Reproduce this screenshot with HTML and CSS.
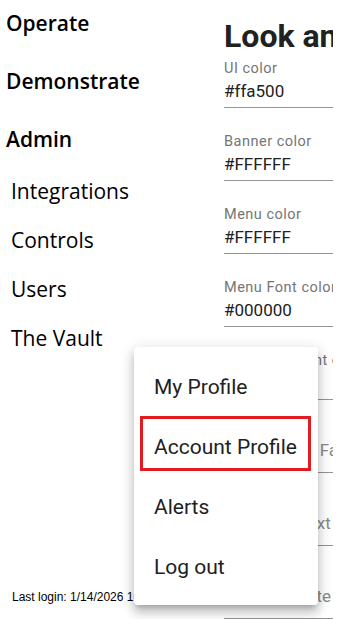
FILE: index.html
```html
<!DOCTYPE html>
<html>
    <head>
        <title>Look and Feel</title>
        <meta charset="UTF-8">
        <meta name="viewport" content="width=device-width, initial-scale=1.0">
        <link rel="stylesheet" href="styles.css">
    </head>
    <body>
        <div class="page">
            <div class="sideNav">
                <div class="navHead">Operate</div>
                <div class="navHead">Demonstrate</div>
                <div class="navHead">Admin</div>
                <div class="navItem">Integrations</div>
                <div class="navItem">Controls</div>
                <div class="navItem">Users</div>
                <div class="navItem">The Vault</div>
                <div class="lastLogin">Last login: 1/14/2026 10:42 AM</div>
            </div>
            <div class="mainContainer">
                <h1 class="pageTitle">Look and Feel</h1>
                <div class="field">
                    <label>UI color</label>
                    <div class="fieldValue">#ffa500</div>
                </div>
                <div class="field">
                    <label>Banner color</label>
                    <div class="fieldValue">#FFFFFF</div>
                </div>
                <div class="field">
                    <label>Menu color</label>
                    <div class="fieldValue">#FFFFFF</div>
                </div>
                <div class="field">
                    <label>Menu Font color</label>
                    <div class="fieldValue">#000000</div>
                </div>
                <div class="field">
                    <label>Sub Menu Font color</label>
                    <div class="fieldValue">#000000</div>
                </div>
                <div class="field empty">
                    <label>Banner Font Family</label>
                    <div class="fieldValue"></div>
                </div>
                <div class="field empty">
                    <label>Welcome Text</label>
                    <div class="fieldValue"></div>
                </div>
                <div class="field empty">
                    <label>Customer Site</label>
                    <div class="fieldValue"></div>
                </div>
            </div>
        </div>

        <div class="userMenu">
            <div class="menuItem">My Profile</div>
            <div class="menuItem">Account Profile</div>
            <div class="menuItem">Alerts</div>
            <div class="menuItem">Log out</div>
            <span class="highlightBox"></span>
        </div>
    </body>
</html>
```

FILE: styles.css
```css
body{
    margin: 0;
    background-color: #ffffff;
    overflow: hidden;
}

.page{
    display: flex;
    width: 333px;
    height: 619px;
    overflow: hidden;
}

.sideNav{
    display: flex;
    flex-direction: column;
    width: 224px;
    flex-shrink: 0;
    font-family: "Open Sans", "Noto Sans", sans-serif;
    color: #000000;
}
.navHead{
    height: 58px;
    line-height: 47px;
    padding-left: 6px;
    font-size: 21px;
    font-weight: 600;
}
.navHead:nth-child(3){
    height: 60px;
}
.navItem{
    height: 49px;
    line-height: 30px;
    padding-left: 11px;
    font-size: 21px;
}
.lastLogin{
    margin-top: auto;
    padding-left: 12px;
    padding-bottom: 15px;
    font-family: "Liberation Sans", Arial, sans-serif;
    font-size: 12px;
    line-height: 14px;
    white-space: nowrap;
    color: #000000;
}

.mainContainer{
    flex: 1;
    min-width: 0;
    overflow: hidden;
    font-family: Roboto, "Liberation Sans", sans-serif;
}
.pageTitle{
    margin: 18px 0 7px 0;
    height: 36px;
    font-size: 32px;
    line-height: 36px;
    font-weight: bold;
    color: #212121;
    white-space: nowrap;
}
.field{
    display: flex;
    flex-direction: column;
    gap: 4px;
    margin-bottom: 26px;
    padding-bottom: 6px;
    border-bottom: 1px solid #949494;
}
.field label{
    font-size: 14.5px;
    line-height: 16px;
    letter-spacing: 0.5px;
    color: #757575;
    white-space: nowrap;
}
.fieldValue{
    height: 20px;
    font-size: 17px;
    line-height: 20px;
    color: #212121;
    white-space: nowrap;
}
.field.empty label{
    font-size: 17px;
    line-height: 20px;
    letter-spacing: 0;
    margin-top: 14px;
    margin-bottom: 6px;
    color: #8a8a8a;
}
.field.empty .fieldValue{
    display: none;
}

.userMenu{
    position: absolute;
    left: 134px;
    top: 347px;
    width: 184px;
    padding: 10px 0 8px 0;
    background-color: #ffffff;
    border-radius: 4px;
    box-shadow: 0 5px 5px -3px rgba(0,0,0,0.2), 0 8px 10px 1px rgba(0,0,0,0.14), 0 3px 14px 2px rgba(0,0,0,0.12);
    font-family: Roboto, "Liberation Sans", sans-serif;
}
.menuItem{
    height: 60px;
    line-height: 60px;
    padding-left: 20px;
    font-size: 21px;
    color: #212121;
    white-space: nowrap;
}
.highlightBox{
    position: absolute;
    left: 6px;
    top: 69px;
    width: 165px;
    height: 49px;
    border: 3px solid #e21b23;
}
```
